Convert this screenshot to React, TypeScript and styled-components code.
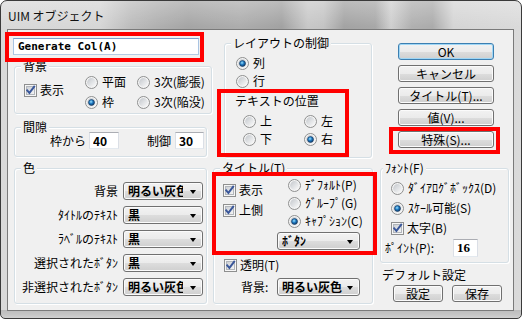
import React from "react";
import styled, { createGlobalStyle } from "styled-components";

const Global = createGlobalStyle`
  html, body { margin: 0; padding: 0; background: #ffffff; }
  body {
    font-family: "Noto Sans CJK JP", "Noto Sans", sans-serif;
    font-size: 12px;
    color: #000;
  }
  #root { width: 522px; height: 319px; }
`;

const Window = styled.div`
  box-sizing: border-box;
  width: 522px;
  height: 319px;
  border: 1px solid #3a3a3a;
  border-radius: 7px 7px 5px 5px;
  overflow: hidden;
  display: flex;
  flex-direction: column;
  background:
    linear-gradient(180deg, rgba(0,0,0,0) 309px, #bcbcbc 309px, #c6c6c6 314px, #d4d4d4 318px),
    linear-gradient(180deg, rgba(255,255,255,0.28) 0px, rgba(255,255,255,0) 26px),
    linear-gradient(90deg, #d9d9d9 0%, #d6d6d6 19%, #bcbcbc 25%, #b0b0b0 30%, #a5a5a5 36%, #adadad 46%, #a2a2a2 54%, #c8c8c8 59%, #c4c4c4 62%, #a3a3a3 66%, #a8a8a8 72%, #cfcfcf 75%, #b0b0b0 79%, #ababab 83%, #d5d5d5 87%, #dadada 100%);
`;

const TitleBar = styled.div`
  flex: none;
  height: 28px;
  display: flex;
  align-items: center;
  padding-left: 7px;
  font-size: 12px;
  color: #111;
  white-space: nowrap;
`;

const Client = styled.div`
  position: relative;
  flex: none;
  box-sizing: border-box;
  width: 507px;
  height: 282px;
  margin-left: 6px;
  border: 1px solid #7a7a7a;
  background: #f0f0f0;
  display: flex;
  align-items: flex-start;
`;

const Mark = styled.div<{ $x: number; $y: number; $w: number; $h: number }>`
  position: absolute;
  left: ${(p) => p.$x}px;
  top: ${(p) => p.$y}px;
  width: ${(p) => p.$w}px;
  height: ${(p) => p.$h}px;
  box-sizing: border-box;
  border: 4px solid #ff0000;
  pointer-events: none;
`;

const LeftCol = styled.div`
  flex: none;
  width: 199px;
  margin-left: 5px;
  display: flex;
  flex-direction: column;
  padding-top: 8px;
`;

const MidCol = styled.div`
  flex: none;
  width: 160px;
  margin-left: 1px;
  display: flex;
  flex-direction: column;
`;

const RightCol = styled.div`
  flex: none;
  width: 129px;
  margin-left: 7px;
  display: flex;
  flex-direction: column;
`;

const Group = styled.div<{ $w: number; $h: number; $mt: number; $ml?: number }>`
  position: relative;
  box-sizing: border-box;
  flex: none;
  width: ${(p) => p.$w}px;
  height: ${(p) => p.$h}px;
  margin-top: ${(p) => p.$mt}px;
  margin-left: ${(p) => p.$ml ?? 0}px;
  border: 1px solid #d5dfe5;
  border-radius: 3px;
  box-shadow: inset 1px 1px 0 #ffffff, 1px 1px 0 #ffffff;
`;

const Legend = styled.span<{ $left?: number }>`
  position: absolute;
  top: -8px;
  left: ${(p) => p.$left ?? 6}px;
  padding: 0 2px;
  background: #f0f0f0;
  line-height: 14px;
  white-space: nowrap;
`;

const Opt = styled.div<{ $h?: number; $gap?: number }>`
  display: flex;
  align-items: center;
  gap: ${(p) => p.$gap ?? 4}px;
  height: ${(p) => p.$h ?? 20}px;
  line-height: 14px;
  white-space: nowrap;
`;

const Svg = styled.svg`
  display: block;
  flex: none;
`;

const Field = styled.input<{ $w: number; $h?: number }>`
  box-sizing: border-box;
  flex: none;
  width: ${(p) => p.$w}px;
  height: ${(p) => p.$h ?? 17}px;
  margin: 0;
  padding: 0 0 0 3px;
  border: 1px solid;
  border-color: #abadb3 #dbdfe6 #e3e9ef #dbdfe6;
  background: #ffffff;
  font-family: "Noto Sans CJK JP", sans-serif;
  font-size: 12px;
  font-weight: 700;
  color: #000;
  outline: none;
`;

const NameField = styled(Field)`
  padding-left: 4px;
  border-color: #7da2ce #a9c4e2 #b4cbe4 #a9c4e2;
  font-family: "DejaVu Sans Mono", "Liberation Mono", monospace;
  font-size: 11px;
`;

const PointField = styled(Field)`
  font-family: "Liberation Serif", serif;
  font-size: 13px;
`;

const Btn = styled.button<{ $w: number; $primary?: boolean }>`
  box-sizing: border-box;
  flex: none;
  width: ${(p) => p.$w}px;
  height: 17px;
  margin: 0;
  padding: 0;
  display: flex;
  align-items: center;
  justify-content: center;
  font-family: "Noto Sans CJK JP", sans-serif;
  font-size: 12px;
  line-height: 14px;
  color: #000;
  white-space: nowrap;
  border: 1px solid ${(p) => (p.$primary ? "#3c7fb1" : "#707070")};
  border-radius: 3px;
  background: linear-gradient(180deg, #f2f2f2 0%, #ebebeb 50%, #dddddd 51%, #cfcfcf 100%);
  box-shadow: inset 0 0 0 1px ${(p) => (p.$primary ? "#9fd6f5" : "#fbfbfb")};
`;

const Select = styled.div<{ $w: number }>`
  box-sizing: border-box;
  flex: none;
  width: ${(p) => p.$w}px;
  height: 18px;
  display: flex;
  align-items: center;
  padding-left: 4px;
  border: 1px solid #707070;
  border-radius: 3px;
  background: linear-gradient(180deg, #f2f2f2 0%, #ebebeb 50%, #dddddd 51%, #cfcfcf 100%);
  box-shadow: inset 0 0 0 1px #fbfbfb;
  font-weight: 700;
`;

const SelValue = styled.span`
  flex: 1;
  min-width: 0;
  overflow: hidden;
  white-space: nowrap;
  line-height: 16px;
`;

const Arrow = styled.span<{ $gap: number }>`
  flex: none;
  width: 0;
  height: 0;
  margin: 1px 6px 0 ${(p) => p.$gap}px;
  border-left: 3.5px solid transparent;
  border-right: 3.5px solid transparent;
  border-top: 4px solid #000;
`;

/* 背景 group */
const BgRow = styled.div`
  display: flex;
  align-items: center;
  padding: 5px 0 0 9px;
`;

const BgCheck = styled(Opt)`
  margin-bottom: 4px;
`;

const RadioGrid = styled.div<{ $col: number; $row: number; $ml: number; $mt?: number }>`
  display: grid;
  grid-template-columns: ${(p) => p.$col}px auto;
  grid-auto-rows: ${(p) => p.$row}px;
  margin-left: ${(p) => p.$ml}px;
  margin-top: ${(p) => p.$mt ?? 0}px;
`;

/* 間隙 group */
const GapRow = styled.div`
  box-sizing: border-box;
  height: 100%;
  display: flex;
  align-items: center;
  padding: 0 0 3px 35px;
  gap: 3px;
  line-height: 14px;
  white-space: nowrap;
`;

const GapLabel = styled.span`
  margin-left: 25px;
  margin-right: 1px;
`;

/* 色 group */
const ColorGrid = styled.div`
  display: grid;
  grid-template-columns: 103px 80px;
  column-gap: 5px;
  grid-auto-rows: 18px;
  row-gap: 6px;
  align-items: center;
  padding-top: 13px;
`;

const RowLabel = styled.span`
  justify-self: end;
  line-height: 14px;
  white-space: nowrap;
`;

/* レイアウト group */
const LayoutBody = styled.div`
  display: flex;
  flex-direction: column;
  padding: 10px 0 0 11px;
`;

const SubLabel = styled.div`
  margin: 4px 0 0 -1px;
  line-height: 14px;
  white-space: nowrap;
`;

/* タイトル group */
const TitleTop = styled.div`
  display: flex;
  padding-top: 7px;
`;

const CheckCol = styled.div`
  display: flex;
  flex-direction: column;
  margin-left: 9px;
  padding-top: 4px;
`;

const RadioCol = styled.div`
  display: flex;
  flex-direction: column;
  margin-left: 25px;
`;

const StyleSelectRow = styled.div`
  display: flex;
  padding-left: 63px;
  margin-top: 2px;
`;

const ClearRow = styled(Opt)`
  margin: 5px 0 0 10px;
`;

const BgLine = styled.div`
  display: flex;
  align-items: center;
  margin-top: 3px;
  padding-left: 27px;
`;

const BgLabel = styled.span`
  flex: none;
  width: 36px;
  line-height: 14px;
  white-space: nowrap;
`;

/* right column */
const BtnStack = styled.div`
  display: flex;
  flex-direction: column;
  gap: 5px;
  margin: 13px 0 0 18px;
`;

const FontBody = styled.div`
  display: flex;
  flex-direction: column;
  padding: 9px 0 0 10px;
`;

const PointRow = styled.div`
  display: flex;
  align-items: center;
  height: 20px;
  margin-left: -6px;
`;

const PointLabel = styled.span`
  flex: none;
  width: 68px;
  line-height: 14px;
  white-space: nowrap;
`;

const DefaultLabel = styled.div`
  margin: 5px 0 0 2px;
  line-height: 14px;
  white-space: nowrap;
`;

const BtnRow = styled.div`
  display: flex;
  gap: 9px;
  margin: 3px 0 0 13px;
`;

const CheckBox = ({ checked }: { checked?: boolean }) => (
  <Svg width="13" height="13" viewBox="0 0 13 13">
    <defs>
      <linearGradient id="cbIn" x1="0" y1="0" x2="1" y2="1">
        <stop offset="0" stopColor="#c9cdd3" />
        <stop offset="1" stopColor="#f7f7f7" />
      </linearGradient>
    </defs>
    <rect x="0.5" y="0.5" width="12" height="12" fill="#f6f6f6" stroke="#8e8f8f" />
    <rect x="2.5" y="2.5" width="8" height="8" fill="url(#cbIn)" stroke="#b2b6bb" />
    {checked && (
      <path
        d="M3.2 6.4 L5.4 8.9 L10.2 2.6"
        fill="none"
        stroke="#3a579a"
        strokeWidth="1.9"
        strokeLinecap="square"
      />
    )}
  </Svg>
);

const RadioBtn = ({ checked }: { checked?: boolean }) => (
  <Svg width="13" height="13" viewBox="0 0 13 13">
    <defs>
      <linearGradient id="rbIn" x1="0" y1="0" x2="1" y2="1">
        <stop offset="0" stopColor="#c3c7cc" />
        <stop offset="1" stopColor="#fbfbfb" />
      </linearGradient>
      <radialGradient id="rbDot" cx="0.42" cy="0.38" r="0.7">
        <stop offset="0" stopColor="#9ce3ff" />
        <stop offset="0.45" stopColor="#1d78c1" />
        <stop offset="1" stopColor="#0a2a52" />
      </radialGradient>
    </defs>
    <circle cx="6.5" cy="6.5" r="6" fill="#f4f4f4" stroke="#8e8f8f" />
    <circle cx="6.5" cy="6.5" r="4.4" fill="url(#rbIn)" />
    {checked && <circle cx="6.5" cy="6.5" r="3" fill="url(#rbDot)" stroke="#183a61" strokeWidth="0.6" />}
  </Svg>
);

const Drop = ({ w, value, gap = 7 }: { w: number; value: string; gap?: number }) => (
  <Select $w={w}>
    <SelValue>{value}</SelValue>
    <Arrow $gap={gap} />
  </Select>
);

export default function App() {
  return (
    <>
      <Global />
      <Window>
        <TitleBar>UIM オブジェクト</TitleBar>
        <Client>
          <LeftCol>
            <NameField $w={186} value="Generate Col(A)" readOnly />
            <Group $w={198} $h={48} $mt={11} $ml={1}>
              <Legend>背景</Legend>
              <BgRow>
                <BgCheck $gap={3}>
                  <CheckBox checked />
                  表示
                </BgCheck>
                <RadioGrid $col={52} $row={20} $ml={21}>
                  <Opt>
                    <RadioBtn />
                    平面
                  </Opt>
                  <Opt>
                    <RadioBtn />
                    3次(膨張)
                  </Opt>
                  <Opt>
                    <RadioBtn checked />
                    枠
                  </Opt>
                  <Opt>
                    <RadioBtn />
                    3次(陥没)
                  </Opt>
                </RadioGrid>
              </BgRow>
            </Group>
            <Group $w={193} $h={30} $mt={13} $ml={1}>
              <Legend>間隙</Legend>
              <GapRow>
                <span>枠から</span>
                <Field $w={30} value="40" readOnly />
                <GapLabel>制御</GapLabel>
                <Field $w={29} value="30" readOnly />
              </GapRow>
            </Group>
            <Group $w={193} $h={136} $mt={11} $ml={1}>
              <Legend>色</Legend>
              <ColorGrid>
                <RowLabel>背景</RowLabel>
                <Drop w={80} value="明るい灰色" />
                <RowLabel>ﾀｲﾄﾙのﾃｷｽﾄ</RowLabel>
                <Drop w={80} value="黒" />
                <RowLabel>ﾗﾍﾞﾙのﾃｷｽﾄ</RowLabel>
                <Drop w={80} value="黒" />
                <RowLabel>選択されたﾎﾞﾀﾝ</RowLabel>
                <Drop w={80} value="黒" />
                <RowLabel>非選択されたﾎﾞﾀﾝ</RowLabel>
                <Drop w={80} value="明るい灰色" />
              </ColorGrid>
            </Group>
          </LeftCol>

          <MidCol>
            <Group $w={148} $h={115} $mt={13} $ml={11}>
              <Legend>レイアウトの制御</Legend>
              <LayoutBody>
                <Opt $h={18}>
                  <RadioBtn checked />
                  列
                </Opt>
                <Opt $h={18}>
                  <RadioBtn />
                  行
                </Opt>
                <SubLabel>テキストの位置</SubLabel>
                <RadioGrid $col={61} $row={18} $ml={7} $mt={4}>
                  <Opt $h={18}>
                    <RadioBtn />
                    上
                  </Opt>
                  <Opt $h={18}>
                    <RadioBtn />
                    左
                  </Opt>
                  <Opt $h={18}>
                    <RadioBtn />
                    下
                  </Opt>
                  <Opt $h={18}>
                    <RadioBtn checked />
                    右
                  </Opt>
                </RadioGrid>
              </LayoutBody>
            </Group>
            <Group $w={160} $h={136} $mt={10}>
              <Legend>タイトル(T)</Legend>
              <TitleTop>
                <CheckCol>
                  <Opt $gap={3}>
                    <CheckBox checked />
                    表示
                  </Opt>
                  <Opt $gap={3}>
                    <CheckBox checked />
                    上側
                  </Opt>
                </CheckCol>
                <RadioCol>
                  <Opt $h={18}>
                    <RadioBtn />
                    ﾃﾞﾌｫﾙﾄ(P)
                  </Opt>
                  <Opt $h={18}>
                    <RadioBtn />
                    ｸﾞﾙｰﾌﾟ(G)
                  </Opt>
                  <Opt $h={18}>
                    <RadioBtn checked />
                    ｷｬﾌﾟｼｮﾝ(C)
                  </Opt>
                </RadioCol>
              </TitleTop>
              <StyleSelectRow>
                <Drop w={83} value="ﾎﾞﾀﾝ" gap={3} />
              </StyleSelectRow>
              <ClearRow $gap={3}>
                <CheckBox checked />
                透明(T)
              </ClearRow>
              <BgLine>
                <BgLabel>背景:</BgLabel>
                <Drop w={83} value="明るい灰色" gap={3} />
              </BgLine>
            </Group>
          </MidCol>

          <RightCol>
            <BtnStack>
              <Btn $w={96} $primary>OK</Btn>
              <Btn $w={96}>キャンセル</Btn>
              <Btn $w={96}>タイトル(T)...</Btn>
              <Btn $w={96}>値(V)...</Btn>
              <Btn $w={96}>特殊(S)...</Btn>
            </BtnStack>
            <Group $w={129} $h={95} $mt={20}>
              <Legend $left={2}>ﾌｫﾝﾄ(F)</Legend>
              <FontBody>
                <Opt>
                  <RadioBtn />
                  ﾀﾞｲｱﾛｸﾞﾎﾞｯｸｽ(D)
                </Opt>
                <Opt>
                  <RadioBtn checked />
                  ｽｹｰﾙ可能(S)
                </Opt>
                <Opt $gap={3}>
                  <CheckBox checked />
                  太字(B)
                </Opt>
                <PointRow>
                  <PointLabel>ﾎﾟｲﾝﾄ(P):</PointLabel>
                  <PointField $w={25} $h={18} value="16" readOnly />
                </PointRow>
              </FontBody>
            </Group>
            <DefaultLabel>デフォルト設定</DefaultLabel>
            <BtnRow>
              <Btn $w={50}>設定</Btn>
              <Btn $w={50}>保存</Btn>
            </BtnRow>
          </RightCol>

          <Mark $x={-3} $y={2} $w={199} $h={30} />
          <Mark $x={209} $y={59} $w={132} $h={68} />
          <Mark $x={204} $y={142} $w={165} $h={83} />
          <Mark $x={381} $y={97} $w={111} $h={27} />
        </Client>
      </Window>
    </>
  );
}
